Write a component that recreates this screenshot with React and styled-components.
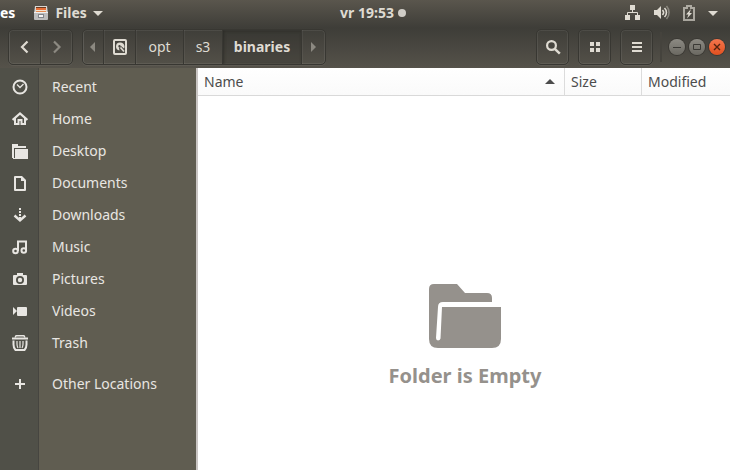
import React from "react";
import styled, { createGlobalStyle, css } from "styled-components";

const GlobalStyle = createGlobalStyle`
  *, *::before, *::after { box-sizing: border-box; }
  html, body { margin: 0; padding: 0; }
  body {
    font-family: "Noto Sans", "Open Sans", sans-serif;
    font-size: 14px;
    line-height: 20px;
    color: #4c4c4c;
    background: #ffffff;
  }
  button { font: inherit; margin: 0; padding: 0; border: 0; background: none; color: inherit; }
`;

const Desktop = styled.div`
  display: flex;
  flex-direction: column;
  min-height: 100vh;
`;

const Panel = styled.header`
  display: grid;
  grid-template-columns: 1fr auto 1fr;
  align-items: center;
  height: 28px;
  padding-bottom: 2px;
  background: linear-gradient(#5a564d, #3e3d38);
  color: #dfdbd2;
  font-weight: 700;
`;

const PanelGroup = styled.div`
  display: flex;
  align-items: center;
  justify-content: ${(p) => (p.$end ? "flex-end" : "flex-start")};
  gap: ${(p) => (p.$end ? "13px" : "18px")};
  padding-right: ${(p) => (p.$end ? "12px" : "0")};
`;

const PanelButton = styled.button`
  display: flex;
  align-items: center;
  gap: ${(p) => p.$gap || 0}px;
  color: ${(p) => (p.$active ? "#ffffff" : "#dfdbd2")};
  padding-left: ${(p) => p.$inset || 0}px;
`;

const Dot = styled.span`
  width: 8px;
  height: 8px;
  border-radius: 50%;
  background: #cfccc6;
`;

const Icon = styled.svg`
  display: block;
  flex: none;
`;

const HeaderBar = styled.div`
  display: flex;
  align-items: center;
  height: 40px;
  padding: 0 5px 2px 8px;
  background: linear-gradient(#3e3d38, #55524a);
  color: #dfdbd2;
`;

const Frame = css`
  border: 1px solid #383732;
  border-radius: 5px;
  box-shadow: inset 0 0 0 1px rgba(255, 255, 255, 0.07), 0 1px 0 rgba(255, 255, 255, 0.06);
`;

const Linked = styled.nav`
  ${Frame}
  display: flex;
  height: 36px;
  overflow: hidden;
  margin-right: 9px;
`;

const Segment = styled.button`
  display: flex;
  align-items: center;
  justify-content: center;
  width: ${(p) => p.$width}px;
  color: ${(p) => (p.$dim ? "#8c8981" : "#dfdbd2")};
  font-weight: ${(p) => (p.$active ? 700 : 400)};
  background: ${(p) => (p.$active ? "rgba(40, 39, 35, 0.25)" : "transparent")};
  box-shadow: ${(p) => (p.$active ? "inset 1px 1px 3px rgba(30, 30, 25, 0.5)" : "inset 1px 0 0 rgba(255, 255, 255, 0.05)")};
  & + & { border-left: 1px solid #383732; }
`;

const Tools = styled.div`
  display: flex;
  gap: 9px;
  margin-left: auto;
`;

const ToolButton = styled.button`
  ${Frame}
  display: flex;
  align-items: center;
  justify-content: center;
  width: 33px;
  height: 36px;
`;

const Divider = styled.span`
  width: 2px;
  height: 30px;
  margin: 0 7px;
  background: #45433d;
`;

const WindowControls = styled.div`
  display: flex;
  gap: 4px;
`;

const WindowButton = styled.button`
  display: grid;
  place-items: center;
  width: 16px;
  height: 16px;
  border-radius: 50%;
  color: ${(p) => (p.$close ? "#54230f" : "#3a3935")};
  background: ${(p) => (p.$close ? "linear-gradient(#f4764d, #e2501f)" : "linear-gradient(#8c8a83, #6b6962)")};
  box-shadow: 0 0 0 1px #3b3934;
`;

const Body = styled.div`
  display: flex;
  flex: 1;
`;

const Sidebar = styled.nav`
  flex: none;
  width: 198px;
  padding-top: 3px;
  border-right: 2px solid #c9c5c3;
  background: linear-gradient(to right, #505048 38px, #464540 38px, #464540 39px, #605d51 39px);
`;

const Place = styled.a`
  display: grid;
  grid-template-columns: 39px 1fr;
  align-items: center;
  height: 32px;
  margin-top: ${(p) => (p.$separated ? "9px" : "0")};
  color: #e8e6e2;
  text-decoration: none;
  ${Icon} { justify-self: center; }
`;

const PlaceName = styled.span`
  padding-left: 13px;
`;

const Content = styled.main`
  flex: 1;
  min-width: 0;
  background: #ffffff;
`;

const FileTable = styled.table`
  width: 100%;
  table-layout: fixed;
  border-spacing: 0;
`;

const Column = styled.th`
  width: ${(p) => p.$width || "auto"};
  height: 28px;
  padding: 0 6px;
  border-bottom: 1px solid #d9d9d9;
  background: linear-gradient(#ffffff, #fafafa);
  font-weight: 400;
  text-align: left;
  & + & { border-left: 1px solid #dcdcdc; }
`;

const SortButton = styled.button`
  display: flex;
  align-items: center;
  justify-content: space-between;
  width: 100%;
  padding-right: ${(p) => (p.$sorted ? "3px" : "0")};
`;

const Empty = styled.section`
  display: flex;
  flex-direction: column;
  align-items: center;
  gap: 14px;
  padding: 188px 0 0 2px;
  color: #95918c;
`;

const EmptyTitle = styled.h1`
  margin: 0;
  font-size: 20px;
  line-height: 28px;
  font-weight: 700;
`;

const Glyph = ({ size = 16, width, height, children }) => (
  <Icon
    width={width || size}
    height={height || size}
    viewBox={`0 0 ${width || size} ${height || size}`}
    fill="currentColor"
    aria-hidden="true"
  >
    {children}
  </Icon>
);

const line = { fill: "none", stroke: "currentColor" };

const CabinetIcon = () => (
  <Glyph>
    <path d="M2 1h12l1 8H1z" fill="#d9d7d3" />
    <path d="M3 2h10v6H3z" fill="#6a3b22" />
    <path d="M3 3h10v2H3z" fill="#e8713a" />
    <path d="M3 5h10v1H3z" fill="#f4e3cf" />
    <path d="M3 6h10v1H3z" fill="#e58a4f" />
    <rect x="1" y="7" width="14" height="8" rx="1" fill="#bdbdbd" />
    <path d="M1 7h14v1H1z" fill="#efefef" />
    <path d="M5 9h6v4H5z" fill="#83858a" />
    <path d="M6 10h4v2H6z" fill="#f5f5f5" />
  </Glyph>
);

const DownArrow = () => (
  <Glyph width={10} height={5}><path d="M0 0h10L5 5z" /></Glyph>
);

const NetworkIcon = () => (
  <Glyph>
    <path d="M5 0h5v5H5zM0 10h5v5H0zM10 10h5v5h-5z" />
    <path d="M7.5 5v3M2.5 10V7.5h10V10" {...line} />
  </Glyph>
);

const VolumeIcon = () => (
  <Glyph>
    <path d="M0 5h3l4-4v13L3 10H0z" />
    <path d="M8.5 5c1.3 1.4 1.3 3.6 0 5" {...line} strokeWidth="1.5" />
    <path d="M10.5 3c2.6 2.6 2.6 6.4 0 9" {...line} strokeWidth="1.6" />
    <path d="M12.5 1c3.4 3.6 3.4 9.4 0 13" {...line} strokeWidth="1.6" opacity="0.4" />
  </Glyph>
);

const BatteryIcon = () => (
  <Glyph width={12}>
    <path d="M1 3h3V1h4v2h3v12H1z" {...line} strokeWidth="2" opacity="0.65" />
    <path d="M8 4L3 9.500h2.500L4 13.500 9 8H6.500z" />
  </Glyph>
);

const ChevronIcon = ({ right }) => (
  <Glyph><path d={right ? "M5 2.500L10.500 8 5 13.500" : "M10.500 2.500L5 8l5.500 5.500"} {...line} strokeWidth="2.200" /></Glyph>
);

const TriangleIcon = ({ right }) => (
  <Glyph width={6} height={10}><path d={right ? "M0 0l5 5-5 5z" : "M5 0L0 5l5 5z"} /></Glyph>
);

const DiskIcon = () => (
  <Glyph>
    <rect x="2" y="1" width="12" height="14" rx="1" {...line} strokeWidth="2" />
    <path fillRule="evenodd" d="M8 3.500a4 4 0 00-4 4 4 4 0 003.500 4L7 9l2-2 3 2.500q.5-1 .5-2A4.200 4.200 0 008 3.500zM7.500 6a1.200 1.200 0 100 2.400A1.200 1.200 0 007.500 6z" />
    <path d="M8.500 8.500l3.500 4" {...line} strokeWidth="1.600" />
  </Glyph>
);

const SearchIcon = () => (
  <Glyph>
    <circle cx="6.500" cy="6.500" r="4.400" {...line} strokeWidth="2.200" />
    <path d="M9.800 9.800l5 4.800" {...line} strokeWidth="2.500" />
  </Glyph>
);

const GridIcon = () => (
  <Glyph size={10}><path d="M0 0h4v4H0zM6 0h4v4H6zM0 6h4v4H0zM6 6h4v4H6z" /></Glyph>
);

const MenuIcon = () => (
  <Glyph size={10}><path d="M0 0h10v2H0zM0 4h10v2H0zM0 8h10v2H0z" /></Glyph>
);

const RecentIcon = () => (
  <Glyph>
    <circle cx="8" cy="8" r="6.500" {...line} strokeWidth="2" />
    <path d="M5 5.500L8 8.500 11.500 5" {...line} strokeWidth="1.300" />
  </Glyph>
);

const HomeIcon = () => (
  <Glyph>
    <path d="M.6 9L8 2.500 15.400 9" {...line} strokeWidth="2.200" />
    <path d="M3 7v6.100h3.500V9h3v4.100H13V7" {...line} strokeWidth="2" />
  </Glyph>
);

const DesktopIcon = () => (
  <Glyph>
    <path d="M0 1h6v2h8v2H2v10H0z" />
    <path d="M3 6h13v10H1v-1h2z" />
  </Glyph>
);

const DocumentIcon = () => (
  <Glyph><path fillRule="evenodd" d="M3 1h7l4 4v10q0 1-1 1H3q-1 0-1-1V2q0-1 1-1zm1 2v11h8V6H9V3z" /></Glyph>
);

const DownloadIcon = () => (
  <Glyph>
    <path d="M7 1h2v2H7zM7 4h2v2H7zM7 7h2v2H7zM7 10h2v3H7z" />
    <path d="M2.500 8.500L8 13.500l5.500-5" {...line} strokeWidth="2.400" />
  </Glyph>
);

const MusicIcon = () => (
  <Glyph>
    <path d="M6 12V2.500h8V11" {...line} strokeWidth="2" />
    <circle cx="3.500" cy="12" r="2.300" {...line} strokeWidth="2" />
    <circle cx="11.800" cy="11.500" r="2.300" {...line} strokeWidth="2" />
  </Glyph>
);

const CameraIcon = () => (
  <Glyph>
    <path fillRule="evenodd" d="M5 2h6v2h3q1 0 1 1v8q0 1-1 1H2q-1 0-1-1V5q0-1 1-1h3zM8 5a4 4 0 100 8 4 4 0 000-8z" />
    <circle cx="8" cy="9" r="2.200" />
  </Glyph>
);

const VideoIcon = () => (
  <Glyph><path d="M1 4l4 4-4 4zM6 4h8q1 0 1 1v7q0 1-1 1H6q-1 0-1-1V5q0-1 1-1z" /></Glyph>
);

const TrashIcon = () => (
  <Glyph>
    <path d="M3 2.500L4 .8h8l1 1.700" {...line} strokeWidth="1.400" />
    <path d="M0 2.500h16v2H0z" />
    <path d="M1.500 5.500v4q0 3.500 2 5.500h9q2-2 2-5.500v-4" {...line} strokeWidth="2" />
    <path d="M5 6v3q0 2.500 1 4M11 6v3q0 2.500-1 4M8 6v7" {...line} strokeWidth="1.200" />
  </Glyph>
);

const PlusIcon = () => (
  <Glyph><path d="M7 3h2v4h4v2H9v4H7V9H3V7h4z" /></Glyph>
);

const FolderIcon = () => (
  <Glyph width={72} height={64}>
    <path d="M5 0h23l8 9h22q5 0 5 5v4H14q-5 0-5 5L7 54q0 2 2 2.500 2 0 2.500-2L13 23h59v32q0 9-9 9H9q-9 0-9-9V5q0-5 5-5z" />
  </Glyph>
);

const places = [
  ["Recent", RecentIcon],
  ["Home", HomeIcon],
  ["Desktop", DesktopIcon],
  ["Documents", DocumentIcon],
  ["Downloads", DownloadIcon],
  ["Music", MusicIcon],
  ["Pictures", CameraIcon],
  ["Videos", VideoIcon],
  ["Trash", TrashIcon],
  ["Other Locations", PlusIcon, true],
];

export default function App() {
  return (
    <Desktop>
      <GlobalStyle />
      <Panel>
        <PanelGroup>
          <PanelButton $active>es</PanelButton>
          <PanelButton $gap={6}>
            <CabinetIcon />
            Files
            <DownArrow />
          </PanelButton>
        </PanelGroup>
        <PanelButton $gap={4} $inset={16}>
          vr 19:53
          <Dot />
        </PanelButton>
        <PanelGroup $end>
          <PanelButton aria-label="Network"><NetworkIcon /></PanelButton>
          <PanelButton aria-label="Volume"><VolumeIcon /></PanelButton>
          <PanelButton aria-label="Battery"><BatteryIcon /></PanelButton>
          <PanelButton aria-label="System menu"><DownArrow /></PanelButton>
        </PanelGroup>
      </Panel>
      <HeaderBar>
        <Linked aria-label="History">
          <Segment $width={31} aria-label="Back"><ChevronIcon /></Segment>
          <Segment $width={32} $dim aria-label="Forward"><ChevronIcon right /></Segment>
        </Linked>
        <Linked aria-label="Path">
          <Segment $width={20} $dim aria-label="Scroll left"><TriangleIcon /></Segment>
          <Segment $width={32} aria-label="Computer"><DiskIcon /></Segment>
          <Segment $width={48}>opt</Segment>
          <Segment $width={39}>s3</Segment>
          <Segment $width={79} $active>binaries</Segment>
          <Segment $width={24} $dim aria-label="Scroll right"><TriangleIcon right /></Segment>
        </Linked>
        <Tools>
          <ToolButton aria-label="Search"><SearchIcon /></ToolButton>
          <ToolButton aria-label="Grid view"><GridIcon /></ToolButton>
          <ToolButton aria-label="Menu"><MenuIcon /></ToolButton>
        </Tools>
        <Divider />
        <WindowControls>
          <WindowButton aria-label="Minimize">
            <Glyph size={8}><path d="M0 4h8v1H0z" /></Glyph>
          </WindowButton>
          <WindowButton aria-label="Maximize">
            <Glyph size={8}><path d="M.5 1.500h7v5h-7z" {...line} /></Glyph>
          </WindowButton>
          <WindowButton $close aria-label="Close">
            <Glyph size={8}><path d="M1 1l6 6M7 1L1 7" {...line} strokeWidth="1.400" /></Glyph>
          </WindowButton>
        </WindowControls>
      </HeaderBar>
      <Body>
        <Sidebar aria-label="Places">
          {places.map(([name, PlaceIcon, separated]) => (
            <Place key={name} href="#" $separated={separated}>
              <PlaceIcon />
              <PlaceName>{name}</PlaceName>
            </Place>
          ))}
        </Sidebar>
        <Content>
          <FileTable>
            <thead>
              <tr>
                <Column aria-sort="ascending">
                  <SortButton $sorted>
                    Name
                    <Glyph width={10} height={5}><path d="M0 5h10L5 0z" /></Glyph>
                  </SortButton>
                </Column>
                <Column $width="77px"><SortButton>Size</SortButton></Column>
                <Column $width="89px"><SortButton>Modified</SortButton></Column>
              </tr>
            </thead>
          </FileTable>
          <Empty>
            <FolderIcon />
            <EmptyTitle>Folder is Empty</EmptyTitle>
          </Empty>
        </Content>
      </Body>
    </Desktop>
  );
}
